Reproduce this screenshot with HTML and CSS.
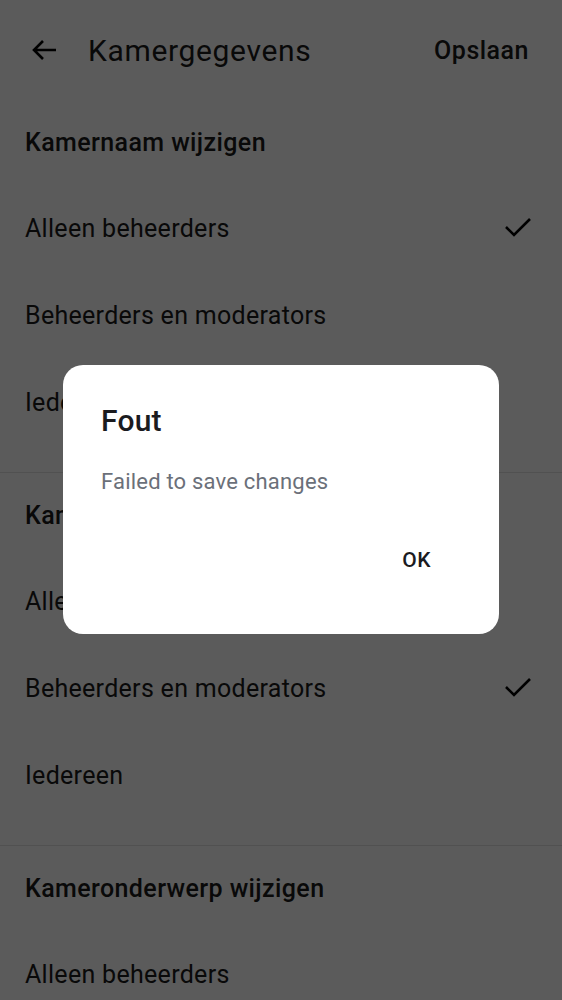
FILE: index.html
```html
<!DOCTYPE html>
<html lang="nl">
<head>
<meta charset="utf-8">
<title>Kamergegevens</title>
<link rel="stylesheet" href="styles.css">
</head>
<body>
<div class="page">
  <header class="topbar">
    <svg class="back" width="28" height="24" viewBox="0 0 28 24"><path d="M26 12H4M13 3L4 12l9 9" fill="none" stroke="#000" stroke-width="2.6"/></svg>
    <h1 class="title">Kamergegevens</h1>
    <span class="save">Opslaan</span>
  </header>

  <section class="group">
    <div class="group-head">Kamernaam wijzigen</div>
    <div class="row"><span>Alleen beheerders</span><svg class="check" width="28" height="22" viewBox="0 0 28 22"><path d="M2 11l8 8L26 3" fill="none" stroke="#000" stroke-width="2.6"/></svg></div>
    <div class="row"><span>Beheerders en moderators</span></div>
    <div class="row"><span>Iedereen</span></div>
  </section>

  <section class="group">
    <div class="group-head">Kameravatar wijzigen</div>
    <div class="row"><span>Alleen beheerders</span></div>
    <div class="row"><span>Beheerders en moderators</span><svg class="check" width="28" height="22" viewBox="0 0 28 22"><path d="M2 11l8 8L26 3" fill="none" stroke="#000" stroke-width="2.6"/></svg></div>
    <div class="row"><span>Iedereen</span></div>
  </section>

  <section class="group last">
    <div class="group-head">Kameronderwerp wijzigen</div>
    <div class="row"><span>Alleen beheerders</span></div>
  </section>
</div>

<div class="overlay">
  <div class="dialog">
    <h2 class="dlg-title">Fout</h2>
    <p class="dlg-msg">Failed to save changes</p>
    <div class="dlg-actions"><span class="ok">OK</span></div>
  </div>
</div>
</body>
</html>
```

FILE: styles.css
```css
* { box-sizing: border-box; }
html, body { margin: 0; padding: 0; }
body {
  font-family: Roboto, "Noto Sans", sans-serif;
  color: #1a1a1a;
  background: #fff;
  width: 562px;
  height: 1000px;
  overflow: hidden;
}
.page { width: 562px; height: 1000px; overflow: hidden; }
.topbar {
  height: 100px;
  display: flex;
  align-items: center;
  padding: 0 33px 0 30px;
}
.back { flex: none; }
.title {
  margin: 0 0 0 30px;
  font-size: 30px;
  font-weight: 400;
  flex: 1;
  letter-spacing: 0.65px;
}
.save {
  font-size: 25px;
  font-weight: 500;
  letter-spacing: 0.5px;
}
.group {
  border-bottom: 1px solid #e4e4e4;
  padding-bottom: 27px;
}
.group.last { border-bottom: 0; padding-bottom: 0; }
.group-head {
  height: 84px;
  display: flex;
  align-items: center;
  padding: 0 25px;
  font-size: 25px;
  font-weight: 500;
  letter-spacing: 0.4px;
}
.row {
  height: 87px;
  display: flex;
  align-items: center;
  justify-content: space-between;
  padding: 1px 30px 0 25px;
  font-size: 25px;
  letter-spacing: 0.3px;
}
.check { flex: none; margin-top: -3px; }
.overlay {
  position: fixed;
  inset: 0;
  background: rgba(0, 0, 0, 0.643);
  display: flex;
  align-items: center;
  justify-content: center;
}
.dialog {
  width: 436px;
  height: 269px;
  margin-top: -1px;
  background: #fff;
  border-radius: 20px;
  padding: 38px 38px 0 38px;
  display: flex;
  flex-direction: column;
}
.dlg-title {
  margin: 0;
  font-size: 30px;
  font-weight: 500;
  line-height: 36px;
  color: #1b1b1f;
  letter-spacing: 0.2px;
}
.dlg-msg {
  margin: 29px 0 0;
  font-size: 22px;
  line-height: 28px;
  color: #6b7079;
  letter-spacing: 0.2px;
}
.dlg-actions {
  display: flex;
  justify-content: flex-end;
  margin-top: 52px;
  padding-right: 30px;
}
.ok {
  font-size: 21px;
  font-weight: 500;
  letter-spacing: 0.5px;
  color: #1b1b1f;
}
```
